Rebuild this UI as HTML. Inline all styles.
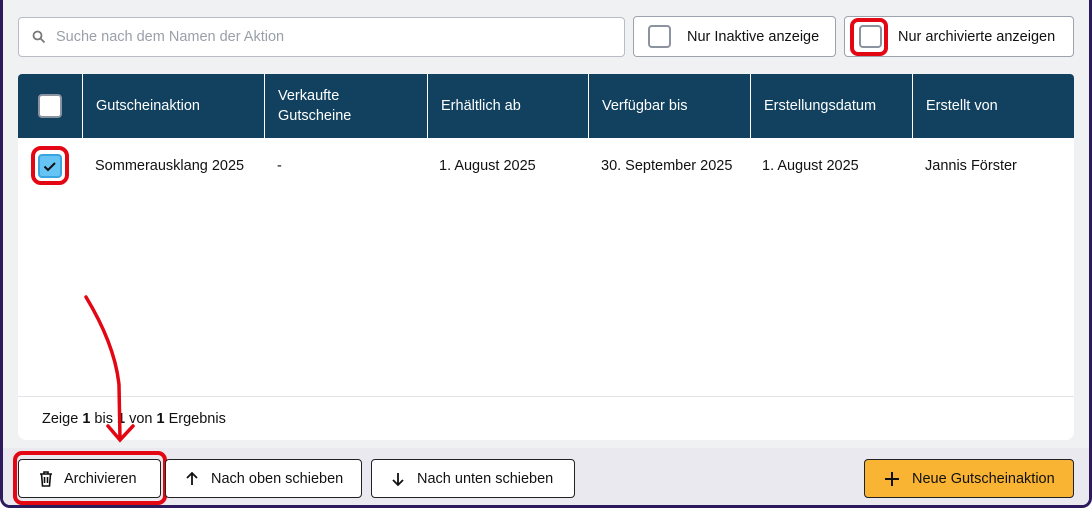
<!DOCTYPE html>
<html><head><meta charset="utf-8"><style>
*{box-sizing:border-box;margin:0;padding:0}
body{width:1092px;height:508px;overflow:hidden;background:#fff;font-family:"Liberation Sans",sans-serif;font-size:14px;color:#111}
.frame{position:absolute;left:0;top:0;width:1092px;height:508px;background:#f0f1f3;border-left:3px solid #2d1a5c;border-right:3px solid #2d1a5c;border-bottom:3px solid #2d1a5c;border-radius:0 0 10px 10px;overflow:hidden}
.bottom{position:absolute;left:0;right:0;top:448px;bottom:0;background:#ebe9f0}
.abs{position:absolute}
.search{left:15px;top:17px;width:607px;height:40px;background:#fff;border:1px solid #b8bcc4;border-radius:4px;color:#9aa0a8;font-size:14.5px;line-height:38px;padding-left:37px}
.btn{background:#fff;border:1px solid #9ca3af;border-radius:4px;height:41px;display:flex;align-items:center;font-size:14.5px;color:#111}
.cb{width:23px;height:23px;border:2px solid #8b93a0;border-radius:4px;background:#fff}
.table{left:15px;top:74px;width:1056px;height:366px;background:#fff;border-radius:4px 4px 8px 8px;overflow:hidden;font-size:14.5px}
.head{position:absolute;left:0;top:0;right:0;height:64px;background:#11415f}
.th{position:absolute;top:0;height:64px;color:#fff;display:flex;align-items:center;padding-left:13px;line-height:20px;border-left:1px solid #fff}
.td{position:absolute;top:84px;}
.bb{position:absolute;top:459px;height:39px;background:#fff;border:1px solid #222;border-radius:4px;display:flex;align-items:center;font-size:14.5px}
</style></head><body>
<div class="frame">
<div class="bottom"></div>
<div class="abs search">Suche nach dem Namen der Aktion
<svg class="abs" style="left:13px;top:12px" width="14" height="14" viewBox="0 0 14 14"><circle cx="5.5" cy="5.5" r="4" fill="none" stroke="#777" stroke-width="1.8"/><line x1="8.5" y1="8.5" x2="12.5" y2="12.5" stroke="#777" stroke-width="1.8"/></svg></div>
<div class="abs btn" style="left:630px;top:16px;width:203px"><div class="cb" style="margin-left:14px"></div><span style="margin-left:16px">Nur Inaktive anzeige</span></div>
<div class="abs btn" style="left:841px;top:16px;width:230px"><div class="cb" style="margin-left:14px"></div><span style="margin-left:16px">Nur archivierte anzeigen</span></div>
<div class="abs" style="left:847px;top:18px;width:38px;height:38px;border:4px solid #e30613;border-radius:8px"></div>

<div class="abs table">
<div class="head">
<div class="cb abs" style="left:20px;top:20px;width:24px;height:24px"></div>
<div class="th" style="left:64px;width:182px">Gutscheinaktion</div>
<div class="th" style="left:246px;width:163px">Verkaufte<br>Gutscheine</div>
<div class="th" style="left:409px;width:161px">Erhältlich ab</div>
<div class="th" style="left:570px;width:162px">Verfügbar bis</div>
<div class="th" style="left:732px;width:162px">Erstellungsdatum</div>
<div class="th" style="left:894px;width:162px">Erstellt von</div>
</div>
<div class="abs" style="left:20px;top:80px;width:24px;height:24px;background:#66c4f5;border:2px solid #38a4e0;border-radius:4px"><svg width="20" height="20" viewBox="0 0 20 20" style="display:block"><path d="M4.5 10.5l3.5 3.5 7-7" fill="none" stroke="#111" stroke-width="2"/></svg></div>
<div class="td" style="left:77px">Sommerausklang 2025</div>
<div class="td" style="left:259px">-</div>
<div class="td" style="left:421px">1. August 2025</div>
<div class="td" style="left:583px">30. September 2025</div>
<div class="td" style="left:744px">1. August 2025</div>
<div class="td" style="left:907px">Jannis Förster</div>
<div class="abs" style="left:0;right:0;top:322px;height:1px;background:#e2e4e8"></div>
<div class="abs" style="left:24px;top:337px">Zeige <b>1</b> bis <b>1</b> von <b>1</b> Ergebnis</div>
</div>
<div class="abs" style="left:28px;top:146px;width:38px;height:39px;border:4px solid #e30613;border-radius:10px"></div>

<div class="bb" style="left:15px;width:143px"><svg style="margin-left:19px" width="16" height="18" viewBox="0 0 16 18"><path d="M2 4h12M6 4V2h4v2M3.5 4l1 12h7l1-12M6.5 7v6M9.5 7v6" fill="none" stroke="#111" stroke-width="1.6"/></svg><span style="margin-left:10px">Archivieren</span></div>
<div class="abs" style="left:10px;top:451px;width:154px;height:54px;border:4px solid #e30613;border-radius:9px"></div>
<div class="bb" style="left:162px;width:197px"><svg style="margin-left:19px" width="14" height="16" viewBox="0 0 14 16"><path d="M7 14V2M2 7l5-5 5 5" fill="none" stroke="#111" stroke-width="1.8"/></svg><span style="margin-left:12px">Nach oben schieben</span></div>
<div class="bb" style="left:368px;width:204px"><svg style="margin-left:19px" width="14" height="16" viewBox="0 0 14 16"><path d="M7 2v12M2 9l5 5 5-5" fill="none" stroke="#111" stroke-width="1.8"/></svg><span style="margin-left:12px">Nach unten schieben</span></div>
<div class="bb" style="left:861px;width:210px;background:#f9b434"><svg style="margin-left:19px" width="16" height="16" viewBox="0 0 16 16"><path d="M8 1v14M1 8h14" stroke="#111" stroke-width="2"/></svg><span style="margin-left:12px">Neue Gutscheinaktion</span></div>

<svg class="abs" style="left:0;top:0" width="1092" height="508"><path d="M83 297 Q112 345 116 385 L117 439" fill="none" stroke="#e30613" stroke-width="3.5" stroke-linecap="round"/><path d="M105 426 L117 440 L130 426" fill="none" stroke="#e30613" stroke-width="3.5" stroke-linecap="round"/></svg>
</div>
</body></html>
